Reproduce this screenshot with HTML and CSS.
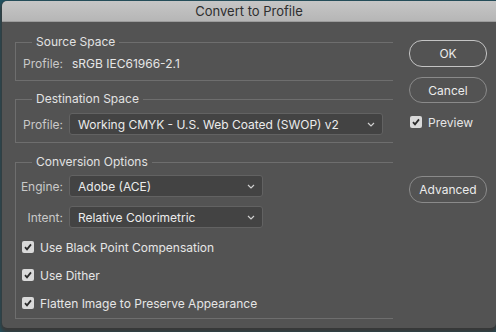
FILE: index.html
```html
<!DOCTYPE html>
<html lang="en">
<head>
  <meta charset="UTF-8">
  <title>Convert to Profile</title>
  <link rel="stylesheet" href="styles.css">
</head>
<body>

  <div class="window">
    <!-- Title Bar -->
    <div class="titlebar">Convert to Profile</div>

    <div class="content">
      <!-- Left Column: option groups -->
      <div class="groups">
        <fieldset class="group source">
          <legend>Source Space</legend>
          <div class="row">
            <span class="label">Profile:</span>
            <span class="value">sRGB IEC61966-2.1</span>
          </div>
        </fieldset>

        <fieldset class="group dest">
          <legend>Destination Space</legend>
          <div class="row">
            <span class="label">Profile:</span>
            <div class="select wide">
              <span>Working CMYK - U.S. Web Coated (SWOP) v2</span>
              <svg class="chevron" width="8" height="5" viewBox="0 0 8 5"><path d="M1 1 L4 4 L7 1" fill="none" stroke="#d0d0d0" stroke-width="1.2"/></svg>
            </div>
          </div>
        </fieldset>

        <fieldset class="group options">
          <legend>Conversion Options</legend>
          <div class="row">
            <span class="label">Engine:</span>
            <div class="select">
              <span>Adobe (ACE)</span>
              <svg class="chevron" width="8" height="5" viewBox="0 0 8 5"><path d="M1 1 L4 4 L7 1" fill="none" stroke="#d0d0d0" stroke-width="1.2"/></svg>
            </div>
          </div>
          <div class="row">
            <span class="label">Intent:</span>
            <div class="select">
              <span>Relative Colorimetric</span>
              <svg class="chevron" width="8" height="5" viewBox="0 0 8 5"><path d="M1 1 L4 4 L7 1" fill="none" stroke="#d0d0d0" stroke-width="1.2"/></svg>
            </div>
          </div>
          <div class="check first">
            <span class="box"><svg width="12" height="12" viewBox="0 0 12 12"><path d="M3 6.2 L5 8.4 L9 3.4" fill="none" stroke="#2a2a2a" stroke-width="1.8"/></svg></span>
            Use Black Point Compensation
          </div>
          <div class="check">
            <span class="box"><svg width="12" height="12" viewBox="0 0 12 12"><path d="M3 6.2 L5 8.4 L9 3.4" fill="none" stroke="#2a2a2a" stroke-width="1.8"/></svg></span>
            Use Dither
          </div>
          <div class="check">
            <span class="box"><svg width="12" height="12" viewBox="0 0 12 12"><path d="M3 6.2 L5 8.4 L9 3.4" fill="none" stroke="#2a2a2a" stroke-width="1.8"/></svg></span>
            Flatten Image to Preserve Appearance
          </div>
        </fieldset>
      </div>

      <!-- Right Column: buttons -->
      <div class="actions">
        <button class="btn default">OK</button>
        <button class="btn cancel">Cancel</button>
        <div class="check preview">
          <span class="box"><svg width="12" height="12" viewBox="0 0 12 12"><path d="M3 6.2 L5 8.4 L9 3.4" fill="none" stroke="#2a2a2a" stroke-width="1.8"/></svg></span>
          Preview
        </div>
        <button class="btn advanced">Advanced</button>
      </div>
    </div>
  </div>

</body>
</html>
```

FILE: styles.css
```css
* {
  margin: 0;
  padding: 0;
  box-sizing: border-box;
  font-family: Inter, "Noto Sans", sans-serif;
}

body {
  width: 496px;
  height: 332px;
  overflow: hidden;
  background-color: #1f5464;
}

/* Window */
.window {
  margin: 1px 0 0 2px;
  width: 494px;
  height: 327px;
  background-color: #535353;
  border-radius: 5px 0 5px 5px;
  box-shadow: 0 3px 4px 2px #383838;
  overflow: hidden;
}

.titlebar {
  height: 21px;
  line-height: 21px;
  text-align: center;
  font-size: 13px;
  color: #2e2e2e;
  background: linear-gradient(#c6c6c6, #b6b6b6);
  border-bottom: 1px solid #9c9c9c;
}

.content {
  display: flex;
  padding: 13px 9px 0 13px;
}

/* Groups */
.groups {
  width: 378px;
}

.group {
  border: 1px solid #6e6e6e;
  border-right: none;
  padding: 6px 0 9px 4px;
}

.group legend {
  margin-left: 12px;
  padding: 0 4px;
  font-size: 12px;
  line-height: 14px;
  color: #e2e2e2;
}

.dest {
  margin-top: 11px;
  padding-top: 7px;
  padding-bottom: 7px;
}

.options {
  margin-top: 12px;
  padding-top: 6px;
  padding-bottom: 7px;
}

.row {
  display: flex;
  align-items: center;
  gap: 6px;
  font-size: 12px;
}

.source .row {
  height: 16px;
}

.options .row + .row {
  margin-top: 9px;
}

.label {
  width: 43px;
  text-align: right;
  color: #c9c9c9;
}

.value {
  padding-left: 3px;
  color: #e6e6e6;
}

.select {
  display: flex;
  align-items: center;
  justify-content: space-between;
  width: 194px;
  height: 22px;
  padding: 0 7px 0 8px;
  background-color: #434343;
  border: 1px solid #626262;
  border-radius: 3px;
  color: #ececec;
}

.select.wide {
  width: 314px;
}

/* Checkboxes */
.check {
  display: flex;
  align-items: center;
  gap: 6px;
  height: 16px;
  margin: 12px 0 0 2px;
  font-size: 12px;
  color: #e6e6e6;
}

.check.first {
  margin-top: 11px;
}

.box {
  width: 12px;
  height: 12px;
  border-radius: 2px;
  background-color: #dadada;
  display: flex;
}

/* Buttons */
.actions {
  display: flex;
  flex-direction: column;
  margin-left: 16px;
  padding-top: 5px;
}

.btn {
  width: 78px;
  height: 26px;
  border-radius: 13px;
  background: transparent;
  border: 1px solid #8a8a8a;
  color: #ececec;
  font-size: 12px;
}

.btn.default {
  border-color: #c4c4c4;
  height: 27px;
}

.btn.cancel {
  margin-top: 10px;
}

.check.preview {
  margin: 11px 0 0 1px;
}

.btn.advanced {
  margin-top: 46px;
  height: 27px;
}
```
